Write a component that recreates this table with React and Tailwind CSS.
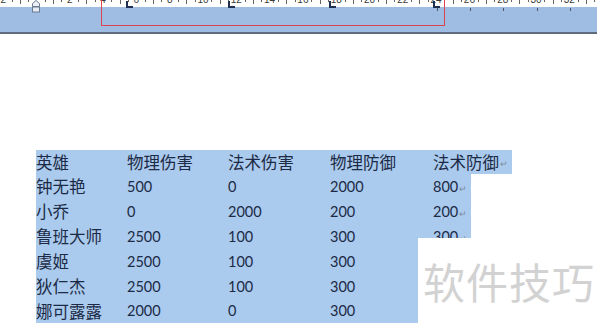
import React from 'react';

const rows = [
  { cells: ['英雄', '物理伤害', '法术伤害', '物理防御', '法术防御'], width: 476, mark: true, height: 'h-[24px]' },
  { cells: ['钟无艳', '500', '0', '2000', '800'], width: 435, mark: true, height: 'h-[25px]' },
  { cells: ['小乔', '0', '2000', '200', '200'], width: 435, mark: true, height: 'h-[25px]' },
  { cells: ['鲁班大师', '2500', '100', '300', '300'], width: 435, mark: true, height: 'h-[25px]' },
  { cells: ['虞姬', '2500', '100', '300', ''], width: 435, height: 'h-[25px]' },
  { cells: ['狄仁杰', '2500', '100', '300', ''], width: 435, height: 'h-[25px]' },
  { cells: ['娜可露露', '2000', '0', '300', ''], width: 435, height: 'h-[24px]' },
];

const colWidths = ['w-[91px]', 'w-[101px]', 'w-[102px]', 'w-[103px]', 'w-[60px]'];

const numbers = [-2, 2, 4, 6, 8, 10, 12, 14, 16, 18, 20, 22, 24, 26, 28, 30, 32, 34];
const unit = 16.65;
const zero = 36.5;

function Cell({ text }) {
  const isNum = /^[0-9]+$/.test(text);
  return isNum ? (
    <span className="text-[14.5px] font-['Lato','Noto_Sans_CJK_SC',sans-serif]">{text}</span>
  ) : (
    <span className="text-[16.5px] font-['Noto_Sans_CJK_SC',sans-serif]">{text}</span>
  );
}

function Ruler() {
  const ticks = [];
  for (let h = -4; h <= 70; h++) {
    if (h % 4 === 0) continue;
    ticks.push(h);
  }
  return (
    <div className="relative h-[34px] w-full">
      <div className="h-[7px] bg-white" />
      <div className="h-[25px] bg-[#9fbce3]" />
      <div className="h-[2px] bg-[#5f6c7e]" />

      {/* ruler labels: only their lower half shows, as in the window */}
      {numbers.map((n) => (
        <span
          key={n}
          className="absolute top-[-5px] -translate-x-1/2 text-[10px] leading-none text-[#3a3a3a] font-['Liberation_Sans',sans-serif]"
          style={{ left: zero + n * unit }}
        >
          {Math.abs(n)}
        </span>
      ))}
      {ticks.map((h) => (
        <span
          key={h}
          className="absolute top-0 w-px bg-[#666]"
          style={{ left: Math.round(zero + (h / 2) * unit), height: h % 2 === 0 ? 4 : 2 }}
        />
      ))}

      {[437, 470, 503, 537, 570].map((x) => (
        <span key={x} className="absolute top-[8px] h-[3px] w-px bg-[#4a5568]" style={{ left: x }} />
      ))}

      {[127, 229, 330, 434].map((x) => (
        <svg key={x} className="absolute top-[1px]" style={{ left: x - 1 }} width="7" height="7" viewBox="0 0 7 7">
          <path d="M0 0h2v5h5v2H0z" fill="#1f2f4f" />
        </svg>
      ))}

      <svg className="absolute left-[31px] top-0" width="10" height="13" viewBox="0 0 10 13">
        <path d="M1.5 6.5V3.5L5 0.5l3.5 3v3z" fill="#eef2f8" stroke="#6b7a8f" />
        <rect x="1.5" y="7" width="7" height="5" fill="#e4ebf5" stroke="#6b7a8f" />
      </svg>

      <div className="absolute left-[101px] top-[-2px] h-[28px] w-[344px] border border-solid border-[#dc4450]" />
    </div>
  );
}

export default function App() {
  return (
    <div className="relative h-[327px] w-[597px] overflow-hidden bg-white text-[#1c2a45]">
      <Ruler />

      <div className="ml-[36px] mt-[116px]">
        {rows.map((row, i) => (
          <div key={i} className={`flex items-center bg-[#aacaee] ${row.height}`} style={{ width: row.width }}>
            {row.cells.map((c, j) => (
              <div key={j} className={`${colWidths[j]} flex shrink-0 items-center whitespace-nowrap`}>
                <Cell text={c} />
                {j === 4 && row.mark && (
                  <span className="ml-[1px] mt-[3px] text-[9px] leading-none text-[#7f8a9c]">↵</span>
                )}
              </div>
            ))}
          </div>
        ))}
      </div>

      <div className="absolute left-[418px] top-[238px] flex h-[89px] w-[179px] items-start bg-white pl-[5px] pt-[22px]">
        <span className="text-[42px] leading-none tracking-[1px] text-[#d2d2d2] font-['Noto_Sans_CJK_SC',sans-serif]">
          软件技巧
        </span>
      </div>
    </div>
  );
}
